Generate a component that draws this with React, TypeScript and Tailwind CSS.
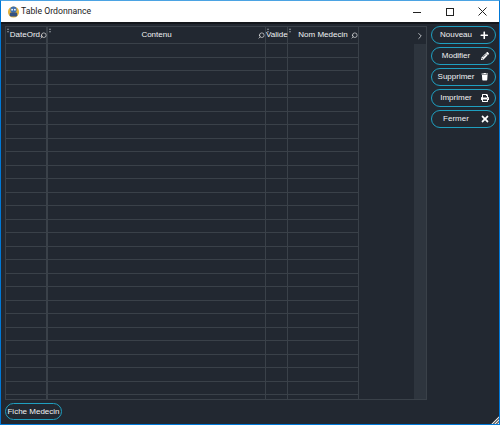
import { FaPlus, FaPencilAlt, FaTrash, FaPrint, FaTimes } from "react-icons/fa";
import { Search, ChevronRight } from "lucide-react";
import type { ReactNode } from "react";

const rows = Array.from({ length: 27 }, (_, i) => i);

const actions: { label: string; icon: ReactNode }[] = [
  { label: "Nouveau", icon: <FaPlus size={8.5} /> },
  { label: "Modifier", icon: <FaPencilAlt size={8} /> },
  { label: "Supprimer", icon: <FaTrash size={7.5} /> },
  { label: "Imprimer", icon: <FaPrint size={8} /> },
  { label: "Fermer", icon: <FaTimes size={10} /> },
];

function HeadCell({ label, width, line, search }: { label: string; width: string; line: string; search?: string }) {
  return (
    <div className={`relative flex h-full shrink-0 items-center border-[#3a4149] ${line} ${width}`}>
      <span className="absolute left-[1px] top-[1px] flex flex-col gap-[1px]">
        <span className="h-0 w-0 border-x-[1.5px] border-b-[2px] border-x-transparent border-b-[#8a9099]" />
        <span className="h-0 w-0 border-x-[1.5px] border-t-[2px] border-x-transparent border-t-[#8a9099]" />
      </span>
      <span className="flex-1 whitespace-nowrap text-center text-[8px] text-[#f0f2f4]">{label}</span>
      {search && <Search size={7} strokeWidth={2} className={`absolute top-[5px] -scale-x-100 text-white ${search}`} />}
    </div>
  );
}

function Row() {
  return (
    <div className="flex h-[13.5px] w-[353px] border-b border-[#3a4149]">
      <div className="w-[42px] shrink-0 border-r-2 border-[#3a4149]" />
      <div className="w-[218px] shrink-0 border-r border-[#3a4149]" />
      <div className="w-[22px] shrink-0 border-r border-[#3a4149]" />
      <div className="w-[71px] shrink-0 border-r border-[#3a4149]" />
    </div>
  );
}

export default function App() {
  return (
    <div className="flex h-[425px] w-[500px] flex-col overflow-hidden border border-[#0078d7] border-t-[#4ba3e3] [font-family:'Liberation_Sans',sans-serif]">
      <div className="flex h-[21px] shrink-0 items-center bg-white pl-[6px]">
        <svg width="13" height="13" viewBox="0 0 14 14" className="mr-[1px]">
          <circle cx="7" cy="7.5" r="6" fill="#e3b23c" />
          <circle cx="7" cy="5" r="3.4" fill="#3c6fb0" />
          <rect x="3" y="8" width="8" height="4.5" rx="1.5" fill="#35517f" />
          <circle cx="5.5" cy="5" r="1" fill="#fff" />
          <circle cx="8.5" cy="5" r="1" fill="#fff" />
        </svg>
        <span className="[font-family:Roboto,sans-serif] text-[8.7px] text-[#222]">Table Ordonnance</span>
        <div className="ml-auto flex items-center">
          <div className="flex w-[33px] justify-center">
            <svg width="8" height="8" viewBox="0 0 8 8"><path d="M0 4.5H8" stroke="#222" /></svg>
          </div>
          <div className="flex w-[33px] justify-center">
            <svg width="8" height="8" viewBox="0 0 8 8"><rect x="0.5" y="0.5" width="7" height="7" fill="none" stroke="#222" /></svg>
          </div>
          <div className="flex w-[33px] justify-center">
            <svg width="9" height="9" viewBox="0 0 9 9"><path d="M0.5 0.5L8.5 8.5M8.5 0.5L0.5 8.5" stroke="#222" /></svg>
          </div>
        </div>
      </div>
      <div className="h-[2px] shrink-0 bg-[#14171c]" />
      <div className="relative flex min-h-0 flex-1 flex-col bg-[#222831] px-[4px] pt-[2px]">
        <div className="flex gap-[4px]">
          <div className="flex h-[374px] w-[422px] shrink-0 border border-[#3a4149]">
            <div className="h-full flex-1 overflow-hidden">
              <div className="flex h-[17px] w-[353px] border-b border-[#3a4149]">
                <HeadCell label="DateOrd." width="w-[42px]" line="border-r-2" search="right-[-1px]" />
                <HeadCell label="Contenu" width="w-[218px]" line="border-r" search="right-0" />
                <HeadCell label="Valide" width="w-[22px]" line="border-r" />
                <HeadCell label="Nom Medecin" width="w-[71px]" line="border-r" search="right-0" />
              </div>
              {rows.map((r) => (
                <Row key={r} />
              ))}
            </div>
            <div className="flex w-[12px] shrink-0 flex-col">
              <div className="flex h-[17px] items-center justify-center text-[#d5d8dc]">
                <ChevronRight size={10} strokeWidth={2} />
              </div>
              <div className="flex-1 bg-[#2e353e]" />
            </div>
          </div>
          <div className="flex flex-col gap-[3px]">
            {actions.map((a) => (
              <button
                key={a.label}
                className="flex h-[18px] w-[65px] items-center rounded-full border-[1.3px] border-[#1f9fc0] pr-[4px] text-[8px] text-[#f0f2f4]"
              >
                <span className="flex-1 pl-[2px] text-center">{a.label}</span>
                <span className="flex w-[13px] justify-center text-white">{a.icon}</span>
              </button>
            ))}
          </div>
        </div>
        <div className="mt-[3px] flex">
          <button className="h-[17px] w-[57px] rounded-full border-[1.3px] border-[#1f9fc0] text-[8px] text-[#f0f2f4]">
            Fiche Medecin
          </button>
        </div>
        <div className="absolute bottom-0 right-0 h-[8px] w-[8px] bg-[repeating-linear-gradient(135deg,#e8e8e8_0,#e8e8e8_1px,#777_1px,#777_2px)] [clip-path:polygon(100%_0,100%_100%,0_100%)]" />
      </div>
    </div>
  );
}
